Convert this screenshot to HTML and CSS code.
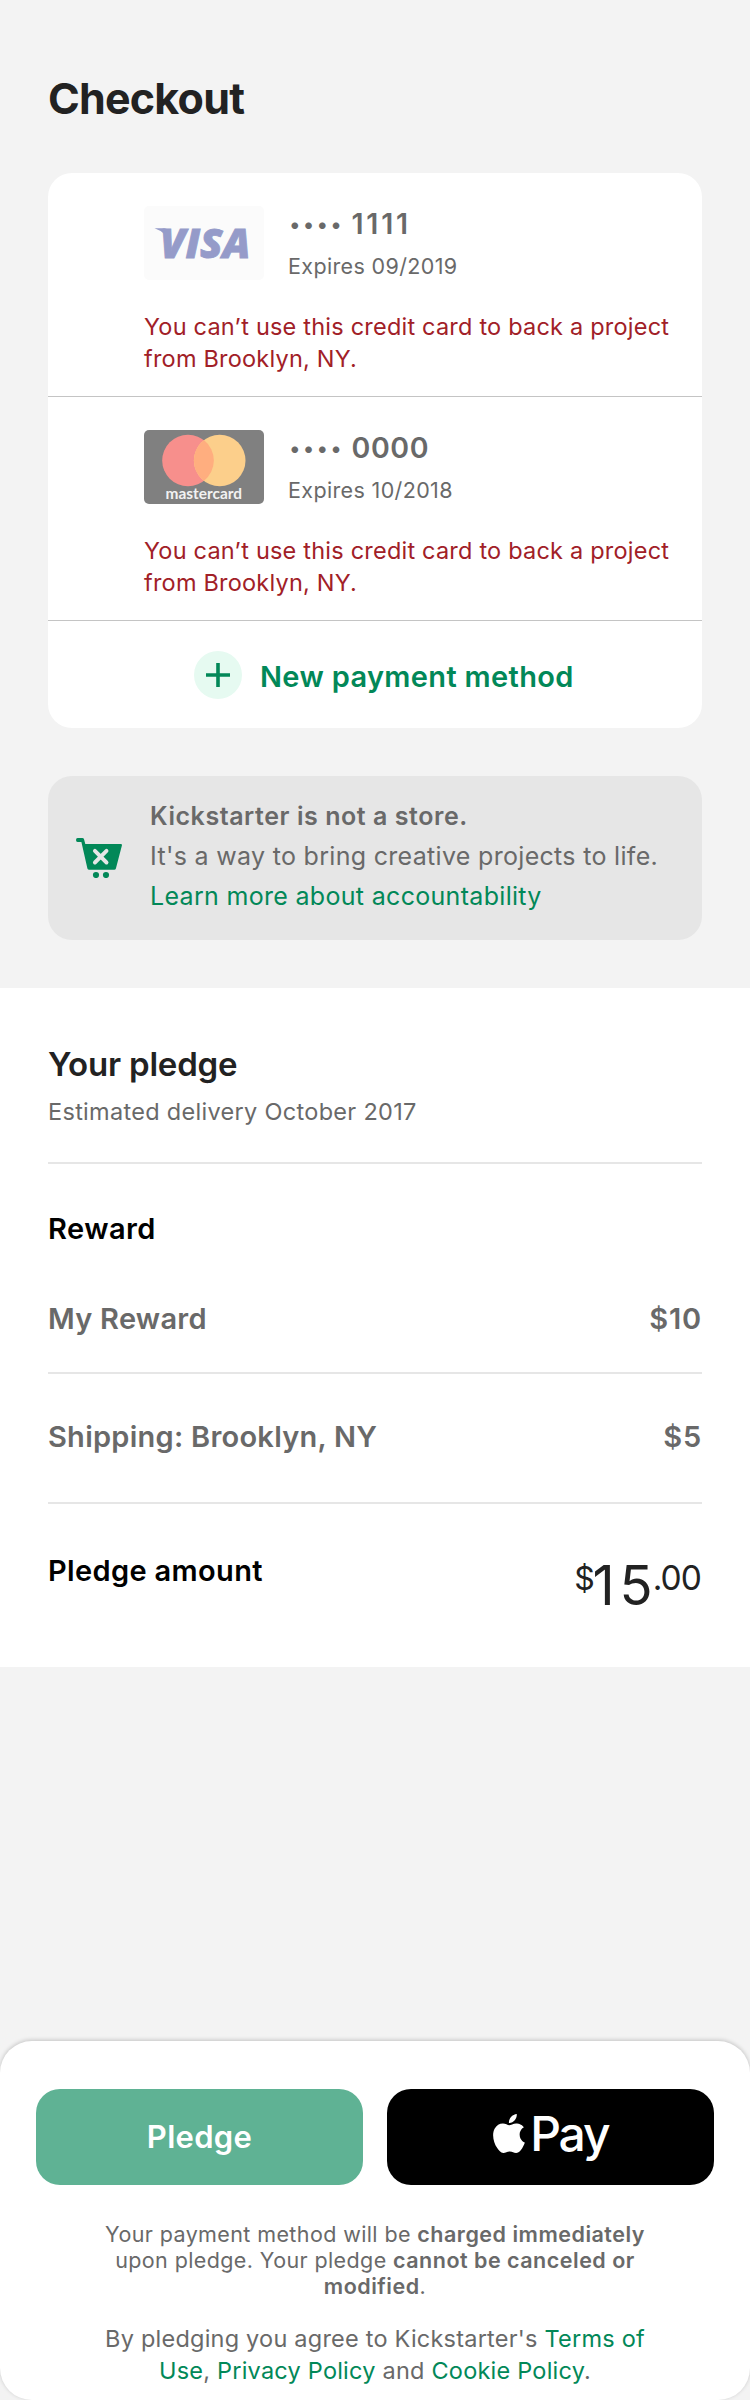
FILE: index.html
```html
<!DOCTYPE html>
<html lang="en">
<head>
<meta charset="utf-8">
<title>Checkout</title>
<link rel="stylesheet" href="styles.css">
</head>
<body>
<main class="checkout">
  <h1 class="title">Checkout</h1>

  <section class="methods">
    <article class="method">
      <div class="method-head">
        <svg class="logo" viewBox="0 0 120 74" role="img" aria-label="Visa">
          <rect width="120" height="74" rx="5" fill="#fbfbfb"/>
          <path d="M10.5 22.2H20.5Q23.5 22.3 24.5 25L27 38Q22 26 10.5 22.2Z" fill="#959bc9"/>
          <text class="visa" x="16" y="51.6" textLength="90.5" lengthAdjust="spacingAndGlyphs">VISA</text>
        </svg>
        <div class="method-info">
          <div class="number"><span class="dots">••••</span><span class="digits digits-narrow">1111</span></div>
          <div class="expiry">Expires 09/2019</div>
        </div>
      </div>
      <p class="error">You can’t use this credit card to back a project<br>from Brooklyn, NY.</p>
    </article>

    <article class="method">
      <div class="method-head">
        <svg class="logo" viewBox="0 0 120 74" role="img" aria-label="Mastercard">
          <rect width="120" height="74" rx="5" fill="#808080"/>
          <circle cx="44" cy="30.5" r="25.8" fill="#f78f8c"/>
          <circle cx="75.7" cy="30.5" r="25.8" fill="#fccf8b"/>
          <path d="M59.85 10.1A25.8 25.8 0 0 1 59.85 50.9A25.8 25.8 0 0 1 59.85 10.1Z" fill="#ffae7f"/>
          <text class="mastercard" x="21.5" y="69.3" textLength="76.5" lengthAdjust="spacingAndGlyphs">mastercard</text>
        </svg>
        <div class="method-info">
          <div class="number"><span class="dots">••••</span><span class="digits">0000</span></div>
          <div class="expiry">Expires 10/2018</div>
        </div>
      </div>
      <p class="error">You can’t use this credit card to back a project<br>from Brooklyn, NY.</p>
    </article>

    <div class="add">
      <svg class="plus" viewBox="0 0 48 48" aria-hidden="true">
        <circle cx="24" cy="24" r="24" fill="#e6faf1"/>
        <path d="M24 12V36M12 24H36" stroke="#028858" stroke-width="3.6"/>
      </svg>
      <span class="add-label">New payment method</span>
    </div>
  </section>

  <section class="notice">
    <svg class="cart" viewBox="0 0 46 40" aria-hidden="true">
      <path d="M1.6 0H6.3Q7.7 0 8.1 1.4L9.3 6H45Q46.2 6 45.9 7.4L39.9 30.4Q39.5 31.8 38.2 31.8H13.2Q11.8 31.8 11.4 30.4L5.4 4H1.6Q0 4 0 2Q0 0 1.6 0Z" fill="#028858"/>
      <path d="M18.9 12.9L30.5 24.5M30.5 12.9L18.9 24.5" stroke="#e6e6e6" stroke-width="3.9" stroke-linecap="round"/>
      <circle cx="20" cy="37" r="3.1" fill="#028858"/>
      <circle cx="30" cy="37" r="3.1" fill="#028858"/>
    </svg>
    <div class="notice-text">
      <div class="notice-title">Kickstarter is not a store.</div>
      <div>It's a way to bring creative projects to life.</div>
      <div class="link">Learn more about accountability</div>
    </div>
  </section>
</main>

<section class="pledge">
  <header class="pledge-head">
    <h2 class="pledge-title">Your pledge</h2>
    <p class="delivery">Estimated delivery October 2017</p>
  </header>
  <div class="reward">
    <h3 class="label label-reward">Reward</h3>
    <div class="row"><span>My Reward</span><span class="price">$10</span></div>
  </div>
  <div class="row shipping"><span class="shipping-label">Shipping: Brooklyn, NY</span><span class="price">$5</span></div>
  <div class="total">
    <h3 class="label">Pledge amount</h3>
    <div class="amount"><span class="currency">$</span><span class="whole"><span class="spread">1</span>5</span><span class="cents">.00</span></div>
  </div>
</section>

<footer class="sheet">
  <div class="buttons">
    <button class="button button-pledge">Pledge</button>
    <button class="button button-apple" aria-label="Apple Pay">
      <svg class="apple" viewBox="2.2 0 19.6 24" aria-hidden="true">
        <path fill="#fff" d="M12.152 6.896c-.948 0-2.415-1.078-3.96-1.04-2.04.027-3.91 1.183-4.961 3.014-2.117 3.675-.546 9.103 1.519 12.09 1.013 1.454 2.208 3.09 3.792 3.039 1.52-.065 2.09-.987 3.935-.987 1.831 0 2.35.987 3.96.948 1.637-.026 2.676-1.48 3.676-2.948 1.156-1.688 1.636-3.325 1.662-3.415-.039-.013-3.182-1.221-3.22-4.857-.026-3.04 2.48-4.494 2.597-4.559-1.429-2.09-3.623-2.324-4.39-2.376-2-.156-3.675 1.09-4.61 1.09zM15.53 3.83c.843-1.012 1.4-2.427 1.245-3.83-1.207.052-2.662.805-3.532 1.818-.78.896-1.454 2.338-1.273 3.714 1.338.104 2.715-.688 3.559-1.701"/>
      </svg>
      <span>Pay</span>
    </button>
  </div>
  <p class="charge">Your payment method will be <b>charged immediately</b><br>upon pledge. Your pledge <b>cannot be canceled or</b><br><b>modified</b>.</p>
  <p class="terms">By pledging you agree to Kickstarter's <span class="link">Terms of</span><br><span class="link">Use</span>, <span class="link">Privacy Policy</span> and <span class="link">Cookie Policy</span>.</p>
</footer>
</body>
</html>
```

FILE: styles.css
```css
* {
  box-sizing: border-box;
}

body {
  margin: 0;
  min-height: 2400px;
  display: flex;
  flex-direction: column;
  background: #f3f3f3;
  color: #696969;
  font-family: Inter, "Liberation Sans", sans-serif;
  white-space: nowrap;
}

h1, h2, h3, p {
  margin: 0;
}

svg {
  display: block;
  flex: none;
}

b {
  font-weight: 600;
}

.link {
  color: #028858;
}

/* Payment methods */

.checkout {
  padding: 72px 48px 48px;
}

.title {
  color: #222;
  font-size: 43px;
  font-weight: 700;
  line-height: 52px;
  letter-spacing: -0.78px;
}

.methods {
  margin-top: 49px;
  border-radius: 24px;
  background: #fff;
  overflow: hidden;
}

.method {
  height: 224px;
  padding: 33px 0 0 96px;
  border-bottom: 1px solid #c4c4c4;
}

.method-head {
  display: flex;
  gap: 24px;
}

.logo {
  width: 120px;
  height: 74px;
}

.visa {
  fill: #959bc9;
  stroke: #959bc9;
  stroke-width: 0.8px;
  font-family: "Open Sans", sans-serif;
  font-size: 40.5px;
  font-style: italic;
  font-weight: 800;
}

.mastercard {
  fill: #f2f2f2;
  font-family: Lato, sans-serif;
  font-size: 15px;
  font-weight: 700;
}

.number {
  display: flex;
  height: 35px;
  padding-left: 1.5px;
  font-size: 28.5px;
  font-weight: 600;
  line-height: 35px;
}

.dots {
  width: 62px;
  font-size: 21px;
  line-height: 38.5px;
  letter-spacing: 3.2px;
}

.digits {
  letter-spacing: 0.6px;
}

.digits-narrow {
  letter-spacing: 2.8px;
}

.expiry {
  margin-top: 11px;
  font-size: 21.5px;
  line-height: 28px;
  letter-spacing: 0.36px;
}

.error {
  margin-top: 30.5px;
  color: #a12027;
  font-size: 23.5px;
  line-height: 32px;
  letter-spacing: 0.21px;
}

.add {
  display: flex;
  gap: 18px;
  height: 107px;
  padding: 30px 0 0 146px;
}

.plus {
  width: 48px;
  height: 48px;
}

.add-label {
  color: #028858;
  font-size: 29px;
  font-weight: 600;
  line-height: 52px;
  letter-spacing: 0.34px;
}

/* Accountability notice */

.notice {
  display: flex;
  align-items: center;
  gap: 28px;
  height: 164px;
  margin-top: 48px;
  padding: 0 28px;
  border-radius: 24px;
  background: #e6e6e6;
}

.cart {
  width: 46px;
  height: 40px;
}

.notice-text {
  padding-bottom: 4px;
  font-size: 25px;
  line-height: 40px;
  letter-spacing: 0.31px;
}

.notice-title {
  font-weight: 600;
  letter-spacing: 0.56px;
}

/* Pledge summary */

.pledge {
  height: 679px;
  padding: 56px 48px 0;
  background: #fff;
  font-size: 29px;
  font-weight: 600;
  line-height: 34px;
  letter-spacing: 0.25px;
}

.pledge-head {
  height: 120px;
  border-bottom: 2px solid #e6e6e6;
}

.pledge-title {
  color: #222;
  font-size: 33px;
  font-weight: 600;
  line-height: 40px;
  letter-spacing: -0.2px;
}

.delivery {
  margin-top: 13.5px;
  font-size: 23.5px;
  font-weight: 400;
  line-height: 28px;
  letter-spacing: 0.3px;
}

.label {
  color: #000;
  font-size: inherit;
  font-weight: inherit;
  letter-spacing: 0.35px;
}

.label-reward {
  margin-bottom: 56px;
  letter-spacing: 0.45px;
}

.row {
  display: flex;
  justify-content: space-between;
}

.price {
  letter-spacing: 0.8px;
}

.reward {
  height: 210px;
  padding-top: 48px;
  border-bottom: 2px solid #e6e6e6;
}

.shipping {
  height: 130px;
  padding-top: 45.5px;
  border-bottom: 2px solid #e6e6e6;
}

.shipping-label {
  letter-spacing: 0.26px;
}

.total {
  display: flex;
  justify-content: space-between;
  padding-top: 48.5px;
}

.total .label {
  padding-top: 1.3px;
}

.amount {
  display: flex;
  padding-right: 1px;
  color: #222;
  font-weight: 400;
}

.currency {
  font-size: 32px;
  line-height: 51px;
  letter-spacing: -2.3px;
}

.whole {
  font-size: 54.5px;
  line-height: 65px;
  letter-spacing: 0;
}

.spread {
  letter-spacing: 4.8px;
}

.cents {
  font-size: 33.5px;
  line-height: 51px;
  letter-spacing: -0.9px;
}

/* Bottom sheet */

.sheet {
  margin-top: auto;
  padding: 48px 36px 13.5px;
  border-radius: 32px;
  background: #fff;
  box-shadow: 0 -1px 4px rgba(0, 0, 0, 0.2);
  text-align: center;
}

.buttons {
  display: grid;
  grid-template-columns: repeat(2, 327px);
  gap: 24px;
}

.button {
  display: flex;
  justify-content: center;
  align-items: center;
  height: 96px;
  padding: 0;
  border: 0;
  border-radius: 24px;
  color: #fff;
  font-family: inherit;
}

.button-pledge {
  padding: 0 0 2px;
  background: #5fb294;
  font-size: 31px;
  font-weight: 600;
  letter-spacing: 0.3px;
}

.button-apple {
  gap: 5.5px;
  padding-bottom: 8px;
  background: #000;
  font-size: 48px;
  font-weight: 500;
  letter-spacing: -2.2px;
}

.apple {
  width: 32px;
  height: 39px;
}

.charge {
  margin-top: 36px;
  font-size: 21.5px;
  line-height: 26px;
  letter-spacing: 0.39px;
}

.charge b {
  letter-spacing: 0.5px;
}

.terms {
  margin-top: 23.5px;
  font-size: 23.5px;
  line-height: 32px;
  letter-spacing: 0.22px;
}
```
